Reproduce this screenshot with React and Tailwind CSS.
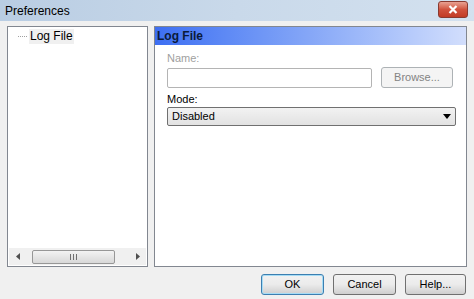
import React from "react";

const font = { fontFamily: "'Liberation Sans', Arial, sans-serif" };

const Btn = ({ children, focused, disabled, className = "" }) => (
  <div
    className={`flex items-center justify-center rounded-[3px] border text-[11px] ${
      focused ? "border-[#3c7fb1] shadow-[inset_0_0_0_1px_#a6dcf5]" : "border-[#707070]"
    } ${disabled ? "border-[#adb2b5] text-[#838383] bg-[#f4f4f4]" : "bg-gradient-to-b from-[#f2f2f2] via-[#ebebeb] to-[#cfcfcf] text-black"} ${className}`}
  >
    {children}
  </div>
);

export default function App() {
  return (
    <div className="w-[474px] h-[299px] bg-[#f0f0f0] flex flex-col overflow-hidden" style={font}>
      {/* title bar */}
      <div className="h-[21px] bg-gradient-to-r from-[#b9cde3] via-[#c9d9ea] to-[#d3e1ef] flex items-center justify-between pl-[5px] pr-[6px]">
        <span className="text-[12px] text-black">Preferences</span>
        <div className="w-[30px] h-[17px] mt-[-2px] rounded-[3px] border border-[#8a3a30] bg-gradient-to-b from-[#e8a192] via-[#d0523d] to-[#c23b25] flex items-center justify-center">
          <svg width="10" height="9" viewBox="0 0 10 9">
            <path d="M1.5 1 L8.5 8 M8.5 1 L1.5 8" stroke="#fff" strokeWidth="2.2" />
          </svg>
        </div>
      </div>

      <div className="flex-1 flex flex-col px-[7px] pt-[5px]">
        <div className="flex gap-[6px] h-[241px]">
          {/* tree */}
          <div className="w-[142px] border border-[#828790] bg-white flex flex-col">
            <div className="flex-1 pl-[10px] pt-[2px]">
              <div className="flex items-center text-[12px]">
                <span className="w-[9px] border-t border-dotted border-[#a0a0a0] mr-[2px]" />
                <span className="bg-[#f0f0f0] px-[1px] leading-[15px]">Log File</span>
              </div>
            </div>
            {/* horizontal scrollbar */}
            <div className="h-[17px] bg-[#f0f0f0] flex items-center mb-[1px] mx-[1px]">
              <div className="w-[17px] flex justify-center">
                <svg width="4" height="7" viewBox="0 0 4 7"><path d="M4 0 L0 3.5 L4 7Z" fill="#505050" /></svg>
              </div>
              <div className="w-[83px] h-[14px] ml-[6px] rounded-[2px] border border-[#979797] bg-gradient-to-b from-[#f3f3f3] to-[#d8d8d8] flex items-center justify-center">
                <svg width="7" height="6" viewBox="0 0 7 6"><path d="M0.5 0 V6 M3.5 0 V6 M6.5 0 V6" stroke="#707070" /></svg>
              </div>
              <div className="flex-1" />
              <div className="w-[17px] flex justify-center">
                <svg width="4" height="7" viewBox="0 0 4 7"><path d="M0 0 L4 3.5 L0 7Z" fill="#505050" /></svg>
              </div>
            </div>
          </div>

          {/* page */}
          <div className="w-[313px] border border-[#828790] bg-white flex flex-col">
            <div className="h-[18px] bg-gradient-to-r from-[#3d6ef2] via-[#86a7f7] to-[#d2defc] flex items-center px-[2px]">
              <span className="text-[12px] font-bold text-[#0a1a3a]">Log File</span>
            </div>
            <div className="px-[12px] pt-[7px] flex flex-col">
              <span className="text-[11px] text-[#a0a0a0] leading-[13px]">Name:</span>
              <div className="flex items-center mt-[2px]">
                <div className="w-[205px] h-[20px] border border-[#b4b4b4] rounded-[2px] bg-white" />
                <Btn disabled className="w-[72px] h-[21px] ml-[9px]">Browse...</Btn>
              </div>
              <span className="text-[11px] text-black leading-[13px] mt-[5px]">Mode:</span>
              <div className="mt-[1px] w-[289px] h-[19px] border border-[#707070] rounded-[2px] bg-gradient-to-b from-[#f2f2f2] to-[#e2e2e2] flex items-center justify-between px-[4px]">
                <span className="text-[11px] text-black">Disabled</span>
                <svg width="8" height="5" viewBox="0 0 8 5"><path d="M0 0 H8 L4 5Z" fill="#000" /></svg>
              </div>
            </div>
          </div>
        </div>

        {/* buttons */}
        <div className="flex justify-end gap-[9px] mt-[7px] pr-[1px]">
          <Btn focused className="w-[63px] h-[21px]">OK</Btn>
          <Btn className="w-[63px] h-[21px]">Cancel</Btn>
          <Btn className="w-[61px] h-[21px]">Help...</Btn>
        </div>
      </div>
    </div>
  );
}
